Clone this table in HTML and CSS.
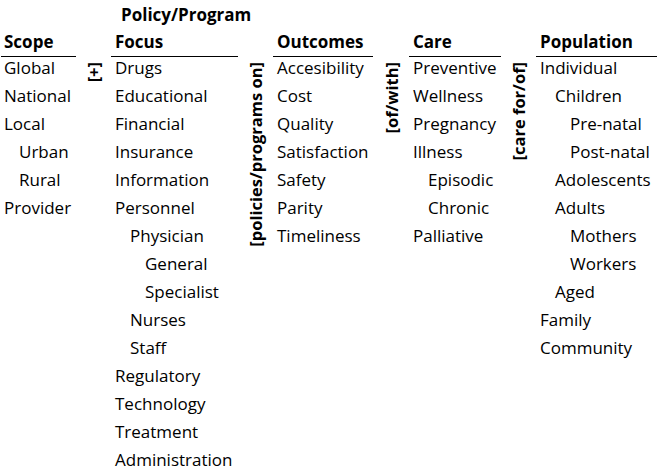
FILE: index.html
```html
<!DOCTYPE html>
<html>
<head>
<meta charset="utf-8">
<link rel="stylesheet" href="styles.css">
</head>
<body>
<div class="title">Policy/Program</div>
<div class="table">
  <div class="col scope">
    <div class="head">Scope</div>
    <ul class="list">
      <li>Global</li>
      <li>National</li>
      <li>Local</li>
      <li class="l1">Urban</li>
      <li class="l1">Rural</li>
      <li>Provider</li>
    </ul>
  </div>
  <div class="conn plus"><span>[+]</span></div>
  <div class="col focus">
    <div class="head">Focus</div>
    <ul class="list">
      <li>Drugs</li>
      <li>Educational</li>
      <li>Financial</li>
      <li>Insurance</li>
      <li>Information</li>
      <li>Personnel</li>
      <li class="l1">Physician</li>
      <li class="l2">General</li>
      <li class="l2">Specialist</li>
      <li class="l1">Nurses</li>
      <li class="l1">Staff</li>
      <li>Regulatory</li>
      <li>Technology</li>
      <li>Treatment</li>
      <li>Administration</li>
    </ul>
  </div>
  <div class="conn pol"><span>[policies/programs on]</span></div>
  <div class="col outcomes">
    <div class="head">Outcomes</div>
    <ul class="list">
      <li>Accesibility</li>
      <li>Cost</li>
      <li>Quality</li>
      <li>Satisfaction</li>
      <li>Safety</li>
      <li>Parity</li>
      <li>Timeliness</li>
    </ul>
  </div>
  <div class="conn ofwith"><span>[of/with]</span></div>
  <div class="col care">
    <div class="head">Care</div>
    <ul class="list">
      <li>Preventive</li>
      <li>Wellness</li>
      <li>Pregnancy</li>
      <li>Illness</li>
      <li class="l1">Episodic</li>
      <li class="l1">Chronic</li>
      <li>Palliative</li>
    </ul>
  </div>
  <div class="conn carefor"><span>[care for/of]</span></div>
  <div class="col population">
    <div class="head">Population</div>
    <ul class="list">
      <li>Individual</li>
      <li class="l1">Children</li>
      <li class="l2">Pre-natal</li>
      <li class="l2">Post-natal</li>
      <li class="l1">Adolescents</li>
      <li class="l1">Adults</li>
      <li class="l2">Mothers</li>
      <li class="l2">Workers</li>
      <li class="l1">Aged</li>
      <li>Family</li>
      <li>Community</li>
    </ul>
  </div>
</div>
</body>
</html>
```

FILE: styles.css
```css
html, body {
  margin: 0;
  padding: 0;
  background: #ffffff;
}
body {
  font-family: "Open Sans", "Noto Sans", sans-serif;
  font-size: 17px;
  color: #000000;
  width: 657px;
  height: 474px;
  overflow: hidden;
}
.title {
  font-weight: 700;
  padding-left: 121px;
  height: 28px;
  line-height: 30px;
}
.table {
  display: flex;
  align-items: flex-start;
}
.col {
  display: flex;
  flex-direction: column;
}
.head {
  font-weight: 700;
  line-height: 28px;
  border-bottom: 1px solid #000;
  padding-left: 4px;
}
.list {
  list-style: none;
  margin: -3px 0 0 0;
  padding: 0;
}
.list li {
  line-height: 28px;
  padding-left: 4px;
  white-space: nowrap;
}
.list li.l1 { padding-left: 19px; }
.list li.l2 { padding-left: 34px; }
.scope .head,
.scope .list li { padding-left: 3px; }
.scope .list li.l1 { padding-left: 18px; }
.scope { margin-left: 1px; width: 75px; }
.focus { width: 127px; }
.outcomes { width: 100px; }
.care { width: 92px; }
.population { width: 121px; }
.conn {
  padding-top: 34px;
  display: flex;
  justify-content: center;
}
.conn span {
  writing-mode: vertical-rl;
  transform: rotate(180deg);
  font-weight: 700;
  font-size: 16.5px;
  line-height: 17px;
}
.plus { width: 35px; }
.pol { width: 35px; }
.ofwith { width: 36px; }
.carefor { width: 35px; }
```
